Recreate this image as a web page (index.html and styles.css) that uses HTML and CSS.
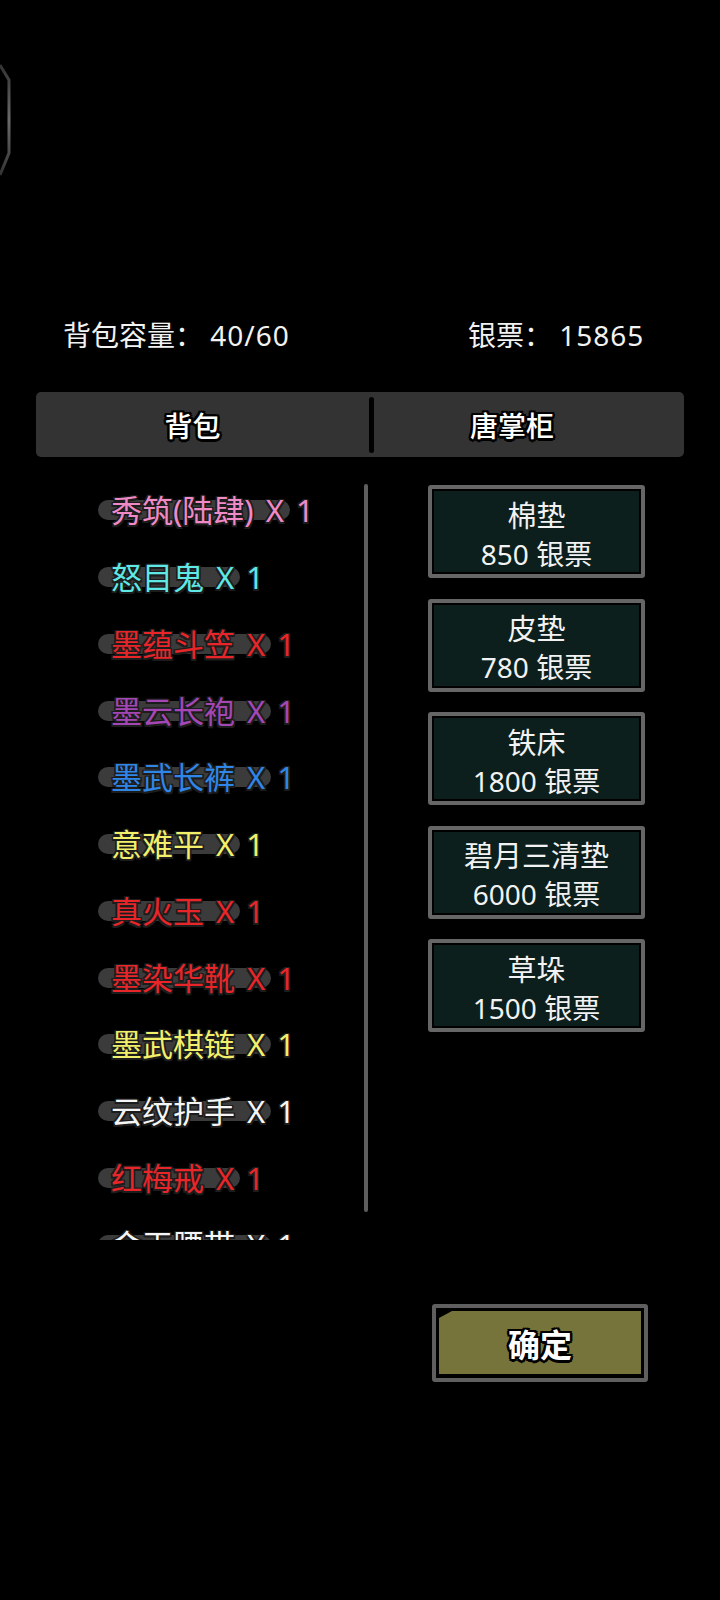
FILE: index.html
```html
<!DOCTYPE html>
<html lang="zh-CN">
<head>
<meta charset="utf-8">
<title>背包</title>
<link rel="stylesheet" href="styles.css">
</head>
<body>
<div class="screen">
  <div class="top">
    <svg class="edge" width="14" height="118" viewBox="0 0 14 118">
      <defs>
        <linearGradient id="eg" x1="0" y1="0" x2="0" y2="1">
          <stop offset="0" stop-color="#333"/>
          <stop offset="0.5" stop-color="#6a6a6a"/>
          <stop offset="1" stop-color="#333"/>
        </linearGradient>
      </defs>
      <path d="M0 3 L9 18 L9 91 L0 113" stroke="url(#eg)" stroke-width="3" fill="none"/>
    </svg>
  </div>

  <div class="stats">
    <div class="stat">背包容量： <span class="num">40/60</span></div>
    <div class="stat">银票： <span class="num">15865</span></div>
  </div>

  <div class="tabs">
    <div class="tab tab-left">背包</div>
    <div class="divider"></div>
    <div class="tab tab-right">唐掌柜</div>
  </div>

  <div class="content">
    <div class="list">
      <div class="row c-pink"><span class="item">秀筑(陆肆) X 1</span></div>
      <div class="row c-cyan"><span class="item">怒目鬼 X 1</span></div>
      <div class="row c-red"><span class="item">墨蕴斗笠 X 1</span></div>
      <div class="row c-purple"><span class="item">墨云长袍 X 1</span></div>
      <div class="row c-blue"><span class="item">墨武长裤 X 1</span></div>
      <div class="row c-yellow"><span class="item">意难平 X 1</span></div>
      <div class="row c-red"><span class="item">真火玉 X 1</span></div>
      <div class="row c-red"><span class="item">墨染华靴 X 1</span></div>
      <div class="row c-yellow"><span class="item">墨武棋链 X 1</span></div>
      <div class="row c-white"><span class="item">云纹护手 X 1</span></div>
      <div class="row c-red"><span class="item">红梅戒 X 1</span></div>
      <div class="row c-white"><span class="item">金玉腰带 X 1</span></div>
    </div>
    <div class="scrollbar"></div>
    <div class="shop">
      <div class="goods"><div class="g-name">棉垫</div><div class="g-price">850 银票</div></div>
      <div class="goods"><div class="g-name">皮垫</div><div class="g-price">780 银票</div></div>
      <div class="goods"><div class="g-name">铁床</div><div class="g-price">1800 银票</div></div>
      <div class="goods"><div class="g-name">碧月三清垫</div><div class="g-price">6000 银票</div></div>
      <div class="goods"><div class="g-name">草垛</div><div class="g-price">1500 银票</div></div>
    </div>
  </div>

  <div class="footer">
    <div class="confirm"><div class="confirm-face">确定</div></div>
  </div>
</div>
</body>
</html>
```

FILE: styles.css
```css
* { box-sizing: border-box; }
html, body {
  margin: 0;
  padding: 0;
  background: #000;
}
body {
  width: 720px;
  height: 1600px;
  overflow: hidden;
  font-family: "Noto Sans", "Noto Sans CJK SC", sans-serif;
  color: #fff;
}
.screen {
  width: 720px;
  height: 1600px;
  display: flex;
  flex-direction: column;
}
.top {
  height: 315px;
  padding-top: 62px;
}
.edge { display: block; }

.stats {
  display: grid;
  grid-template-columns: 405px auto;
  padding-left: 63px;
  height: 40px;
  line-height: 40px;
  font-size: 28px;
  color: #f2f2f2;
}
.stat { white-space: pre; }
.num { letter-spacing: 1px; }

.tabs {
  margin: 37px 36px 0 36px;
  height: 65px;
  background: #333333;
  border-radius: 5px;
  display: flex;
  align-items: center;
}
.tab {
  height: 65px;
  display: flex;
  align-items: center;
  justify-content: center;
  font-size: 28px;
  font-weight: 500;
  color: #fff;
  text-shadow:
    -2px -2px 0 #000, 2px -2px 0 #000, -2px 2px 0 #000, 2px 2px 0 #000,
    0 -2.5px 0 #000, 0 2.5px 0 #000, -2.5px 0 0 #000, 2.5px 0 0 #000;
}
.tab-left { width: 333px; padding-right: 20px; }
.tab-right { width: 310px; padding-right: 34px; }
.divider {
  width: 5px;
  height: 56px;
  background: #000;
  border-radius: 3px;
}

.content {
  margin-top: 20px;
  display: flex;
  align-items: flex-start;
}
.list {
  width: 364px;
  height: 763px;
  overflow: hidden;
  padding-left: 111px;
}
.row {
  height: 66.75px;
  display: flex;
  align-items: center;
  font-size: 31px;
  white-space: nowrap;
}
.item {
  position: relative;
  z-index: 0;
  line-height: 40px;
  word-spacing: 4px;
  text-shadow:
    -1.5px -1.5px 0 #1c1c1c, 1.5px -1.5px 0 #1c1c1c, -1.5px 1.5px 0 #1c1c1c, 1.5px 1.5px 0 #1c1c1c,
    0 -1.5px 0 #1c1c1c, 0 1.5px 0 #1c1c1c, -1.5px 0 0 #1c1c1c, 1.5px 0 0 #1c1c1c;
}
.item::before {
  content: "";
  position: absolute;
  left: -13px;
  right: 24px;
  top: 10px;
  height: 20px;
  border-radius: 10px;
  background: #3b3b3b;
  z-index: -1;
}
.c-pink { color: #f08ac6; }
.c-cyan { color: #5ee8e6; }
.c-red { color: #e8262a; }
.c-purple { color: #a447b4; }
.c-blue { color: #2f86e6; }
.c-yellow { color: #f2ef6a; }
.c-white { color: #f5f5f5; }

.scrollbar {
  width: 4px;
  height: 728px;
  margin-top: 7px;
  background: #5e5e5e;
  border-radius: 2px;
}

.shop {
  margin-left: 60px;
  margin-top: 8px;
  display: flex;
  flex-direction: column;
  gap: 20.5px;
}
.goods {
  width: 217px;
  height: 93px;
  border: 4px solid #666;
  border-radius: 3px;
  box-shadow: inset 0 0 0 2px #000;
  background: #0c1f1d;
  display: flex;
  flex-direction: column;
  align-items: center;
  justify-content: center;
  padding-top: 6px;
  color: #f2f2f2;
}
.g-name {
  font-size: 29px;
  line-height: 39px;
}
.g-price {
  font-size: 28px;
  line-height: 39px;
}

.footer {
  margin-top: 64px;
  padding-left: 432px;
}
.confirm {
  width: 216px;
  height: 78px;
  border: 4px solid #5f5f5f;
  border-radius: 3px;
  background: #000;
  padding: 3px 3px 4px 3px;
}
.confirm-face {
  height: 100%;
  background: #76743a;
  clip-path: polygon(13px 0, 100% 0, 100% 100%, 0 100%, 0 7px);
  display: flex;
  align-items: center;
  justify-content: center;
  font-size: 32px;
  font-weight: 700;
  color: #fff;
  text-shadow:
    -2px -2px 0 #000, 2px -2px 0 #000, -2px 2px 0 #000, 2px 2px 0 #000,
    0 -2.5px 0 #000, 0 2.5px 0 #000, -2.5px 0 0 #000, 2.5px 0 0 #000;
}
```
